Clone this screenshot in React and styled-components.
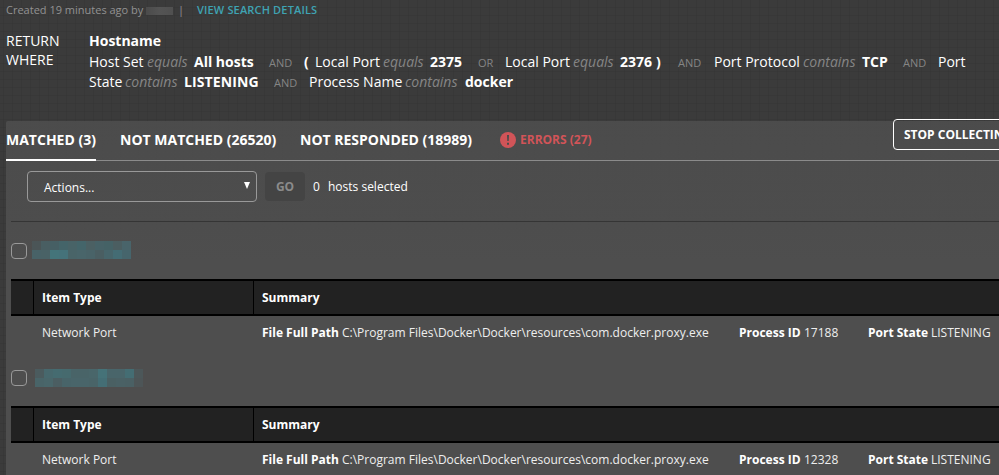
import React from "react";
import styled, { createGlobalStyle } from "styled-components";

const GlobalStyle = createGlobalStyle`
  * { box-sizing: border-box; }
  html, body { margin: 0; height: 100%; overflow: hidden; background: #3a3a3a; }
  body { font-family: "Open Sans", sans-serif; color: #fff; }
`;

const Page = styled.main`
  width: 999px;
  height: 475px;
  overflow: hidden;
  background-color: #3b3b3b;
  background-image:
    linear-gradient(to right, rgba(0, 0, 0, 0.045) 1px, transparent 1px),
    linear-gradient(to bottom, rgba(0, 0, 0, 0.045) 1px, transparent 1px);
  background-size: 9px 8px;
  background-position: 3px 7px;
  white-space: nowrap;
`;

const MetaBar = styled.div`
  display: flex;
  align-items: center;
  height: 20px;
  padding-left: 6px;
  font-size: 11px;
  line-height: 20px;
  color: #929292;
`;

const Created = styled.span`
  width: 140px;
`;

const Redacted = styled.span`
  width: 27px;
  height: 8px;
  margin-top: 2px;
  background: linear-gradient(90deg, #4b4b4b, #545454 50%, #505050);
`;

const Divider = styled.span`
  width: 24px;
  padding-left: 5px;
`;

const DetailsLink = styled.a`
  font-weight: 600;
  letter-spacing: 0.16px;
  color: #3fa3b3;
`;

const Query = styled.section`
  display: flex;
  height: 101px;
  padding: 11px 0 0 6px;
  font-size: 14px;
`;

const Keywords = styled.div`
  width: 83px;
  line-height: 19px;
`;

const Clauses = styled.div`
  line-height: 20px;
`;

const Clause = styled.div`
  display: flex;
  height: ${(p) => p.$h || 20}px;
`;

const Term = styled.span`
  flex: none;
  width: ${(p) => p.$w}px;
  letter-spacing: ${(p) => p.$track || 0}px;
`;
const Value = styled(Term)`
  font-weight: 700;
`;
const Operator = styled(Term)`
  font-style: italic;
  color: #858585;
`;
const Joiner = styled(Term)`
  padding-top: 1px;
  font-size: 11px;
  color: #858585;
`;

const Panel = styled.section`
  height: 354px;
  margin-left: 6px;
  border-top-left-radius: 2px;
  background: linear-gradient(rgba(78, 78, 78, 0.88), rgba(78, 78, 78, 0.94) 100px, #4e4e4e 140px);
`;

const Tabs = styled.nav`
  display: flex;
  height: 40px;
  border-bottom: 1px solid #8b8b8b;
`;

const Tab = styled.div`
  flex: none;
  width: ${(p) => p.$w}px;
  height: 40px;
  margin-right: ${(p) => p.$gap}px;
  border-bottom: 2px solid ${(p) => (p.$active ? "#fff" : "transparent")};
  font-size: 14px;
  font-weight: 700;
  line-height: 38px;
`;

const ErrorTab = styled(Tab)`
  display: flex;
  align-items: center;
  gap: 4px;
  font-size: 12px;
  color: #d15458;
`;

const StopButton = styled.button`
  flex: none;
  width: 130px;
  height: 31px;
  margin-top: -2px;
  padding: 0 10px;
  border: 1px solid #fff;
  border-radius: 4px;
  background: transparent;
  color: #fff;
  font: 700 12px "Open Sans", sans-serif;
  text-align: left;
`;

const Toolbar = styled.div`
  display: flex;
  align-items: center;
  height: 61px;
  margin-left: 5px;
  padding: 0 0 9px 16px;
  border-bottom: 1px solid #353535;
  font-size: 12px;
`;

const Select = styled.div`
  display: flex;
  align-items: center;
  justify-content: space-between;
  width: 230px;
  height: 31px;
  padding: 1px 6px 0 16px;
  border: 1px solid #999;
  border-radius: 4px;
`;

const Arrow = styled.svg`
  margin-bottom: 3px;
`;

const Go = styled.button`
  width: 40px;
  height: 29px;
  margin: 0 8px;
  padding: 0;
  border: 0;
  border-radius: 4px;
  background: #444;
  color: #8b8b8b;
  font: 700 12px "Open Sans", sans-serif;
`;

const Count = styled.span`
  width: 15px;
`;

const Host = styled.div`
  display: flex;
  align-items: center;
  height: ${(p) => p.$h}px;
  margin-left: 5px;
  padding-top: ${(p) => p.$top}px;
`;

const Checkbox = styled.span`
  width: 16px;
  height: 16px;
  border: 1px solid #999;
  border-radius: 4px;
`;

const Mosaic = styled.div`
  display: grid;
  grid-template-columns: repeat(${(p) => p.$cols}, 9px);
  grid-auto-rows: 9px;
  margin: 0 0 ${(p) => p.$lift}px ${(p) => p.$left}px;
`;
const Tile = styled.i`
  background: ${(p) => p.$c};
`;

const HeadRow = styled.div`
  display: grid;
  grid-template-columns: 23px 220px 1fr;
  height: 37px;
  margin-left: 5px;
  border-top: 2px solid #000;
  border-bottom: 2px solid #000;
  background: #222;
  font-size: 12px;
  font-weight: 700;
  line-height: 33px;
`;
const HeadCell = styled.div`
  padding-left: 8px;
  border-right: ${(p) => (p.$last ? 0 : 1)}px solid #000;
`;

const DataRow = styled.div`
  display: flex;
  height: 34px;
  padding-left: 36px;
  font-size: 12px;
  line-height: 34px;
`;
const Cell = styled.span`
  flex: none;
  width: ${(p) => p.$w}px;
  color: #eee;
`;
const Label = styled(Cell)`
  font-weight: 700;
  color: #fff;
`;

const hosts = [
  {
    pid: "17188", h: 57, top: 1, left: 5, lift: 2, cols: 11,
    tiles: "#4b5557 #495e62 #465f64 #446469 #486367 #44656a #4b6063 #476267 #456266 #4b5e61 #49646a #486267 #496266 #44747a #45727a #496468 #49656a #496368 #4a5e62 #47656b #446c74 #46656c",
  },
  {
    pid: "12328", h: 56, top: 0, left: 8, lift: 0, cols: 12,
    tiles: "#4b5b5e #47686d #456b70 #466a6e #496468 #496468 #49666a #457278 #49656a #49656a #446d73 #4c5759 #496468 #49666a #4b5e62 #486469 #49656a #49656a #496468 #446e75 #4a6063 #4a6165 #4a6064 #4d5557",
  },
];

function ErrorIcon() {
  return (
    <svg width="16" height="16" viewBox="0 0 16 16">
      <circle cx="8" cy="8" r="8" fill="#d15458" />
      <path d="M7 3h2l-.3 6H7.3zM7 10.7h2v2H7z" fill="#4b4b4b" />
    </svg>
  );
}

function HostBlock({ host }) {
  return (
    <>
      <Host $h={host.h} $top={host.top}>
        <Checkbox />
        <Mosaic $cols={host.cols} $left={host.left} $lift={host.lift}>
          {host.tiles.split(" ").map((c, i) => <Tile key={i} $c={c} />)}
        </Mosaic>
      </Host>
      <HeadRow>
        <HeadCell />
        <HeadCell>Item Type</HeadCell>
        <HeadCell $last>Summary</HeadCell>
      </HeadRow>
      <DataRow>
        <Cell $w={220}>Network Port</Cell>
        <Label $w={80}>File Full Path</Label>
        <Cell $w={397}>C:\Program Files\Docker\Docker\resources\com.docker.proxy.exe</Cell>
        <Label $w={65}>Process ID</Label>
        <Cell $w={64}>{host.pid}</Cell>
        <Label $w={63}>Port State</Label>
        <Cell $w={70}>LISTENING</Cell>
      </DataRow>
    </>
  );
}

export default function App() {
  return (
    <>
      <GlobalStyle />
      <Page>
        <MetaBar>
          <Created>Created 19 minutes ago by</Created>
          <Redacted />
          <Divider>|</Divider>
          <DetailsLink>VIEW SEARCH DETAILS</DetailsLink>
        </MetaBar>
        <Query>
          <Keywords>
            <div>RETURN</div>
            <div>WHERE</div>
          </Keywords>
          <Clauses>
            <Clause $h={21}><Value>Hostname</Value></Clause>
            <Clause>
              <Term $w={58}>Host Set</Term>
              <Operator $w={47}>equals</Operator>
              <Value $w={75}>All hosts</Value>
              <Joiner $w={35}>AND</Joiner>
              <Value $w={11}>(</Value>
              <Term $w={68}>Local Port</Term>
              <Operator $w={47}>equals</Operator>
              <Value $w={48}>2375</Value>
              <Joiner $w={27}>OR</Joiner>
              <Term $w={68}>Local Port</Term>
              <Operator $w={47}>equals</Operator>
              <Value $w={36}>2376</Value>
              <Value $w={22}>)</Value>
              <Joiner $w={36}>AND</Joiner>
              <Term $w={89}>Port Protocol</Term>
              <Operator $w={59}>contains</Operator>
              <Value $w={41}>TCP</Value>
              <Joiner $w={35}>AND</Joiner>
              <Term $w={30}>Port</Term>
            </Clause>
            <Clause>
              <Term $w={36}>State</Term>
              <Operator $w={59}>contains</Operator>
              <Value $w={90} $track={0.1}>LISTENING</Value>
              <Joiner $w={35}>AND</Joiner>
              <Term $w={96}>Process Name</Term>
              <Operator $w={60}>contains</Operator>
              <Value $w={50}>docker</Value>
            </Clause>
          </Clauses>
        </Query>
        <Panel>
          <Tabs>
            <Tab $active $w={90} $gap={24}>MATCHED (3)</Tab>
            <Tab $w={157} $gap={23}>NOT MATCHED (26520)</Tab>
            <Tab $w={173} $gap={27}>NOT RESPONDED (18989)</Tab>
            <ErrorTab $w={93} $gap={300}><ErrorIcon />ERRORS (27)</ErrorTab>
            <StopButton>STOP COLLECTING</StopButton>
          </Tabs>
          <Toolbar>
            <Select>
              Actions...
              <Arrow width="6" height="7" viewBox="0 0 6 7"><path d="M0 0h6L3 7z" fill="#fff" /></Arrow>
            </Select>
            <Go>GO</Go>
            <Count>0</Count>
            <span>hosts selected</span>
          </Toolbar>
          {hosts.map((h) => <HostBlock key={h.pid} host={h} />)}
        </Panel>
      </Page>
    </>
  );
}
